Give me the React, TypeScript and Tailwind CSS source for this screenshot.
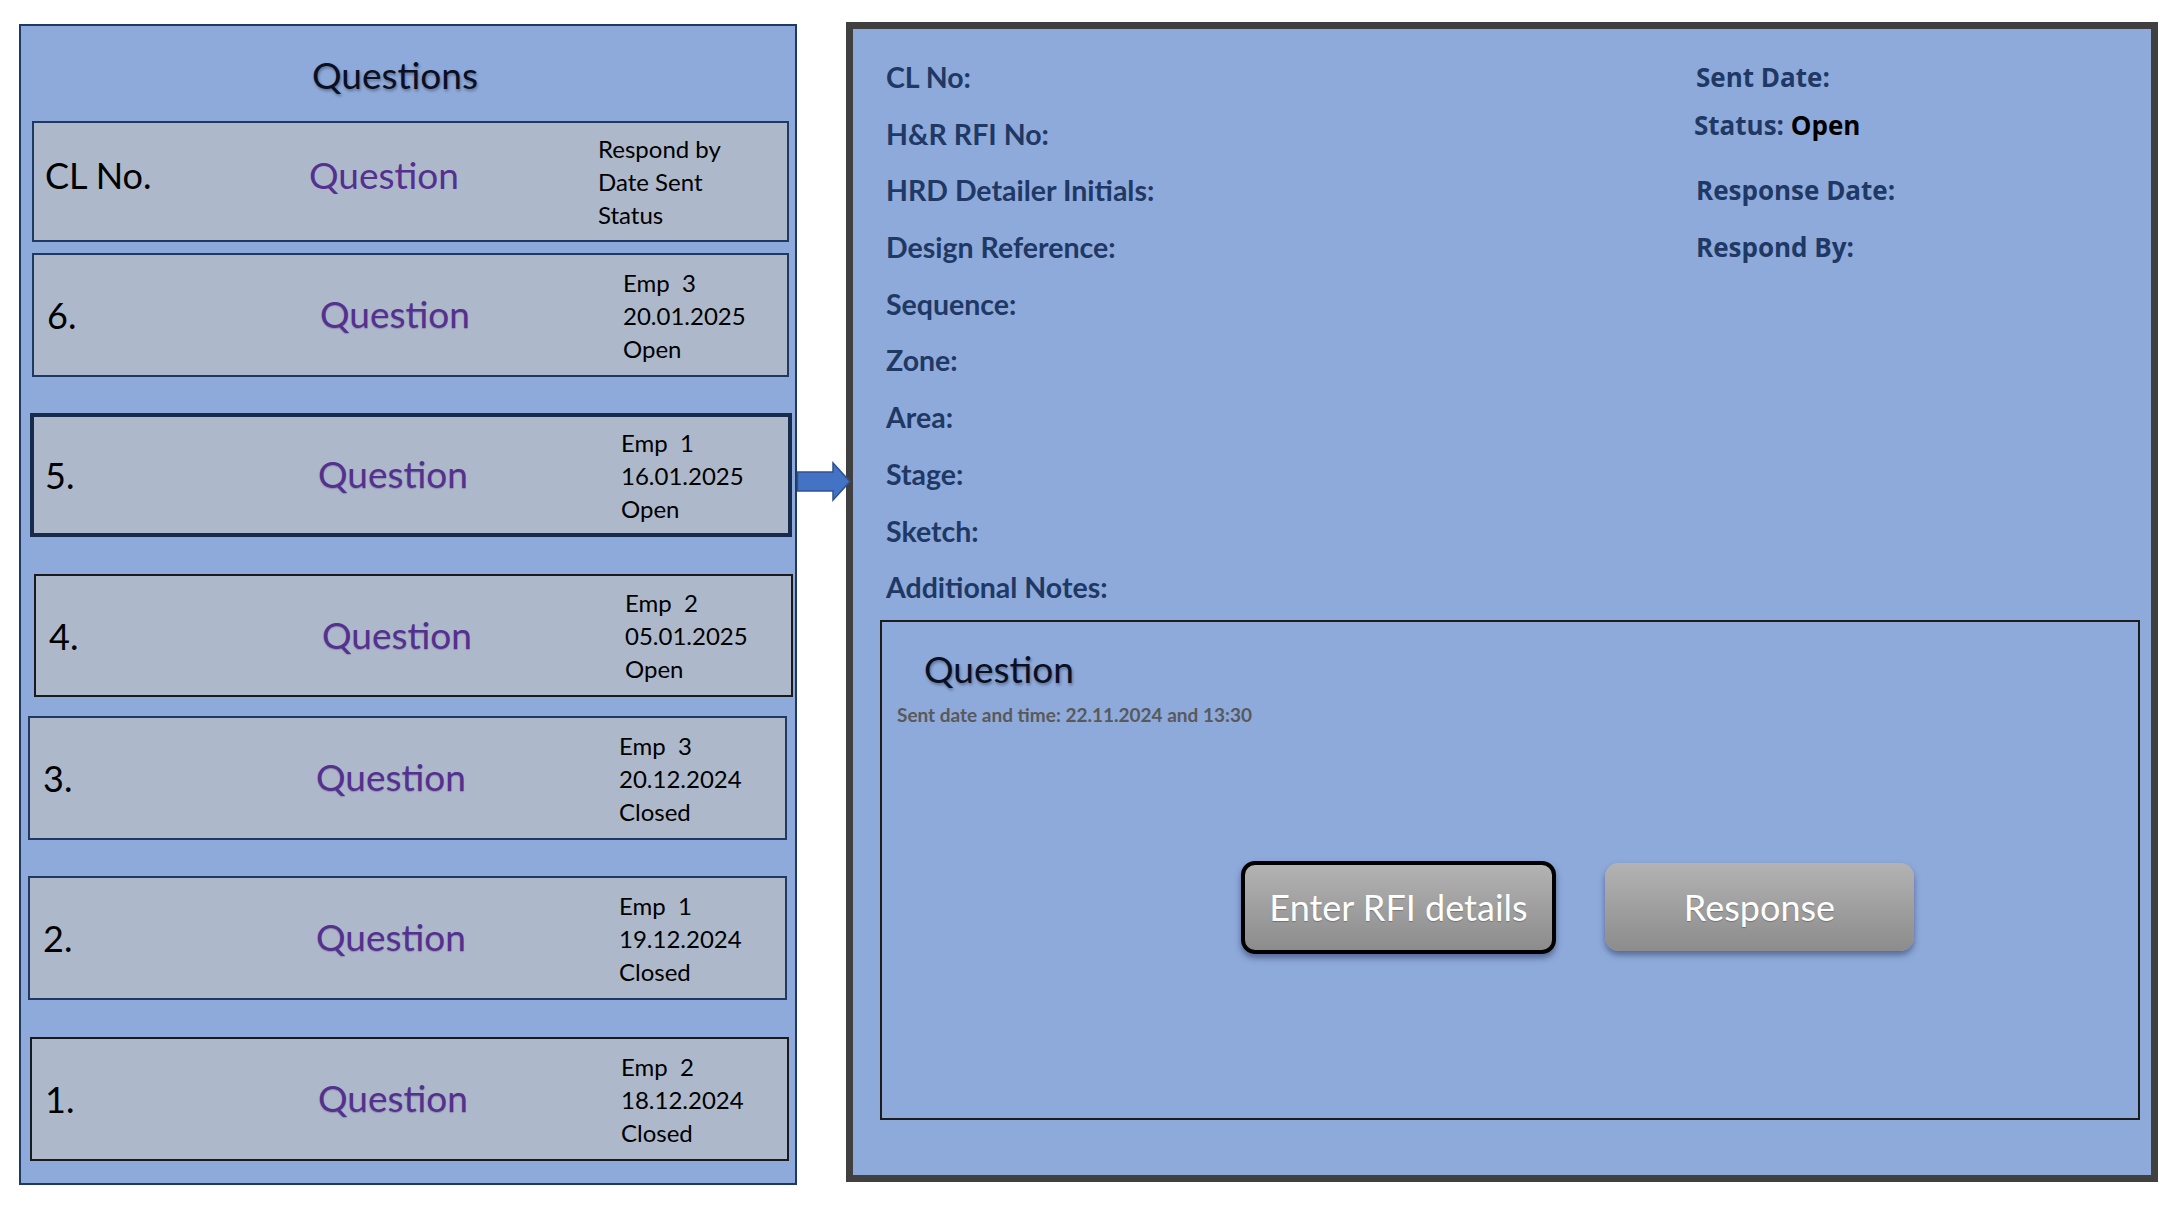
import React from 'react'

type Row = {
  no: string
  emp: string
  date: string
  status: string
  cls: string
}

const rows: Row[] = [
  { no: '6.', emp: 'Emp  3', date: '20.01.2025', status: 'Open', cls: 'mt-[11px] ml-[11px] w-[757px] h-[124px] border-2 border-[#1f3864] pl-[13px]' },
  { no: '5.', emp: 'Emp  1', date: '16.01.2025', status: 'Open', cls: 'mt-[36px] ml-[9px] w-[762px] h-[124px] border-4 border-[#172b4d] pl-[11px]' },
  { no: '4.', emp: 'Emp  2', date: '05.01.2025', status: 'Open', cls: 'mt-[37px] ml-[13px] w-[759px] h-[123px] border-2 border-[#1a1a1a] pl-[13px]' },
  { no: '3.', emp: 'Emp  3', date: '20.12.2024', status: 'Closed', cls: 'mt-[19px] ml-[7px] w-[759px] h-[124px] border-2 border-[#1f3864] pl-[13px]' },
  { no: '2.', emp: 'Emp  1', date: '19.12.2024', status: 'Closed', cls: 'mt-[36px] ml-[7px] w-[759px] h-[124px] border-2 border-[#1f3864] pl-[13px]' },
  { no: '1.', emp: 'Emp  2', date: '18.12.2024', status: 'Closed', cls: 'mt-[37px] ml-[9px] w-[759px] h-[124px] border-2 border-[#1a1a1a] pl-[13px]' },
]

const leftLabels = [
  'CL No:',
  'H&R RFI No:',
  'HRD Detailer Initials:',
  'Design Reference:',
  'Sequence:',
  'Zone:',
  'Area:',
  'Stage:',
  'Sketch:',
  'Additional Notes:',
]

function QuestionRow({ row }: { row: Row }) {
  return (
    <div className={`flex items-center bg-[#adb9ca] ${row.cls}`}>
      <div className="w-[273px] text-[36px] text-black leading-none">{row.no}</div>
      <div className="w-[303px] mb-[3px] text-[37px] text-[#55308f] leading-none [text-shadow:0_1px_1px_rgba(40,20,90,0.25)]">
        Question
      </div>
      <div className="text-[24px] leading-[33px] text-black whitespace-pre">
        <div>{row.emp}</div>
        <div>{row.date}</div>
        <div>{row.status}</div>
      </div>
    </div>
  )
}

export default function App() {
  return (
    <div className="w-[2160px] h-[1215px] bg-white flex items-start font-[Lato,sans-serif]">
      {/* Questions list */}
      <div className="ml-[19px] mt-[24px] w-[778px] h-[1161px] border-2 border-[#1f3864] bg-[#8eaadb] flex flex-col pt-[25px]">
        <div className="h-[48px] leading-[48px] pl-[291px] text-[37px] text-[#0a0f24] [text-shadow:1px_2px_3px_rgba(0,0,0,0.35)]">
          Questions
        </div>
        <div className="mt-[22px] ml-[11px] w-[757px] h-[121px] border-2 border-[#1f3864] bg-[#adb9ca] flex items-center pl-[11px]">
          <div className="w-[264px] mb-[14px] text-[36px] text-black leading-none">CL No.</div>
          <div className="w-[289px] mb-[14px] text-[37px] text-[#55308f] leading-none">Question</div>
          <div className="text-[24px] leading-[33px] text-black">
            <div>Respond by</div>
            <div>Date Sent</div>
            <div>Status</div>
          </div>
        </div>
        {rows.map((r) => (
          <QuestionRow key={r.no} row={r} />
        ))}
      </div>

      {/* Arrow */}
      <div className="relative z-10 w-[49px] mt-[462px]">
        <svg width="54" height="39" viewBox="0 0 54 39" className="overflow-visible">
          <path
            d="M0.5 10 H36 V1 L53 19.5 L36 38 V29 H0.5 Z"
            fill="#4472c4"
            stroke="#2f528f"
            strokeWidth="1.5"
            strokeLinejoin="miter"
          />
        </svg>
      </div>

      {/* Detail panel */}
      <div className="mt-[22px] w-[1312px] h-[1160px] border-[7px] border-[#404040] bg-[#8eaadb] flex flex-col">
        <div className="flex pt-[20px]">
          <div className="w-[843px] pl-[33px] flex flex-col">
            {leftLabels.map((l) => (
              <div key={l} className="h-[56.7px] leading-[56.7px] text-[28.5px] font-bold text-[#1f3864]">
                {l}
              </div>
            ))}
          </div>
          <div className="flex flex-col font-['Open_Sans',sans-serif] font-bold text-[26px] text-[#1f3864]">
            <div className="h-[56px] leading-[56px]">Sent Date:</div>
            <div className="h-[40px] leading-[40px] -ml-[2px]">
              Status: <span className="text-black">Open</span>
            </div>
            <div className="mt-[17px] h-[56px] leading-[56px]">Response Date:</div>
            <div className="mt-[1px] h-[56px] leading-[56px]">Respond By:</div>
          </div>
        </div>

        <div className="mt-[4px] ml-[27px] w-[1260px] h-[500px] border-2 border-[#1c1c1c] flex flex-col pt-[23px]">
          <div className="pl-[42px] h-[48px] leading-[48px] text-[37px] text-[#0a0f24] [text-shadow:1px_2px_3px_rgba(0,0,0,0.35)]">
            Question
          </div>
          <div className="mt-[10px] pl-[15px] h-[24px] leading-[24px] text-[19px] font-bold text-[#595959]">
            Sent date and time: 22.11.2024 and 13:30
          </div>
          <div className="mt-[134px] pl-[359px] flex items-center gap-[49px]">
            <button className="w-[315px] h-[93px] rounded-[14px] border-4 border-black bg-linear-to-b from-[#b3b3b3] to-[#8c8c8c] text-white text-[36px] shadow-[0_4px_6px_rgba(30,40,80,0.5)] [text-shadow:0_1px_1px_rgba(0,0,0,0.25)]">
              Enter RFI details
            </button>
            <button className="w-[309px] h-[88px] rounded-[14px] bg-linear-to-b from-[#b3b3b3] to-[#8c8c8c] text-white text-[36px] shadow-[0_4px_6px_rgba(30,40,80,0.5)] [text-shadow:0_1px_1px_rgba(0,0,0,0.25)]">
              Response
            </button>
          </div>
        </div>
      </div>
    </div>
  )
}
